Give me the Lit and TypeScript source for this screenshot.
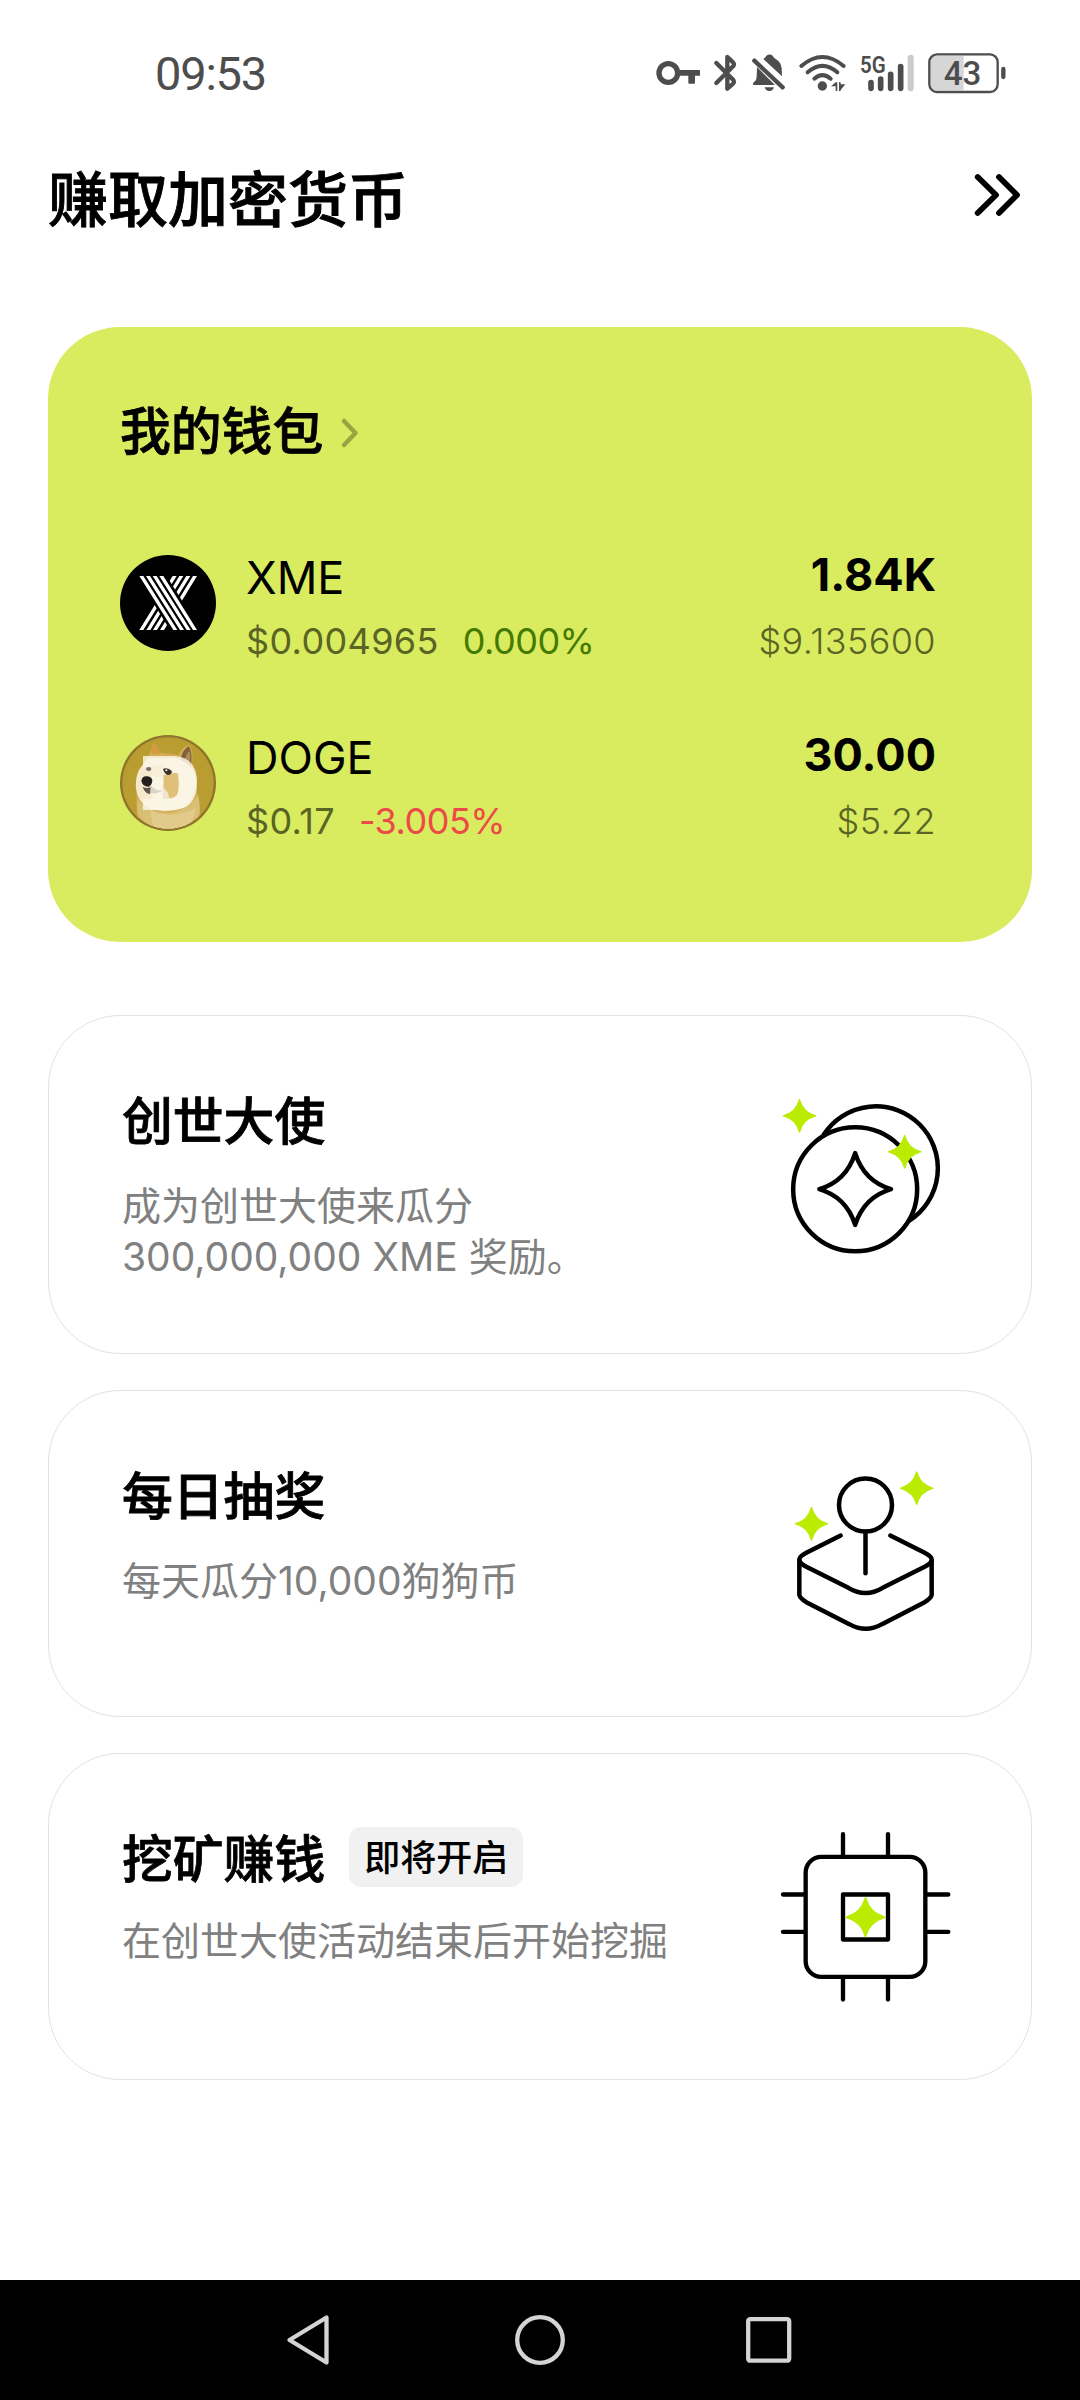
import { LitElement, html, css, svg, nothing, TemplateResult } from "lit";
import { customElement, property } from "lit/decorators.js";

const sparkle = (cx: number, cy: number, r: number) => svg`
  <path fill="#baeb00" transform="translate(${cx} ${cy}) scale(${r / 50})"
    d="M0-50 Q2-50 3-45 Q12-13 45-3 Q50-2 50 0 Q50 2 45 3 Q12 13 3 45 Q2 50 0 50 Q-2 50 -3 45 Q-12 13 -45 3 Q-50 2 -50 0 Q-50-2 -45-3 Q-12-13 -3-45 Q-2-50 0-50Z"/>`;

const coinsIcon = html`<svg viewBox="30 28.5 570 570" width="190" height="190" fill="none" stroke="#000" stroke-width="13.500" stroke-linecap="round" stroke-linejoin="round">
  <circle cx="285.500" cy="326.500" r="186"/>
  <path d="M191 163 A186 186 0 1 1 448 420"/>
  <path d="M285.500 218 Q312 302 393 326 Q312 350 285.500 433 Q259 350 178 326 Q259 302 285.500 218Z"/>
  <g stroke="none">${sparkle(118.5, 106, 51)}${sparkle(434, 214, 51)}</g>
</svg>`;

const joystickIcon = html`<svg viewBox="30 25.500 570 570" width="190" height="190" fill="none" stroke="#000" stroke-width="13.500" stroke-linecap="round" stroke-linejoin="round">
  <circle cx="316.500" cy="163.500" r="79.500"/>
  <path d="M316.500 244V368"/>
  <path d="M242 255 L139 307 Q118 318 118 327 Q118 338 139 349 L265 412 Q317 443 368 412 L494 349 Q515 338 515 327 Q515 318 494 307 L391 255"/>
  <path d="M118 330V433 Q119 443 139 455 L268 521 Q317 549 366 521 L494 455 Q514 443 515 433 V330"/>
  <g stroke="none">${sparkle(470, 113, 51)}${sparkle(154.5, 220, 51)}</g>
</svg>`;

const chipIcon = html`<svg viewBox="30 34.500 570 570" width="190" height="190" fill="none" stroke="#000" stroke-width="13" stroke-linecap="round" stroke-linejoin="round">
  <rect x="137" y="139" width="359" height="360" rx="47"/>
  <rect x="249" y="252" width="135" height="135"/>
  <path d="M249 71V136M384 71V136M249 502V567M384 502V567M69 252H134M69 364H134M499 252H565M499 364H565"/>
  <g stroke="none">${sparkle(316.5, 320, 61)}</g>
</svg>`;

const xmeIcon = html`<svg viewBox="0 0 288 288" width="96" height="96">
  <circle cx="144" cy="144" r="144"/>
  <path fill="#fff" d="M158 63H170L70 225H58ZM178 63H190L91 225H79ZM199 63H211L111 225H99ZM219 63H231L132 225H120Z"/>
  <path d="M48 60H138L243 228H152Z"/>
  <path fill="#fff" d="M58 63H70L172 225H160ZM78 63H90L192 225H180ZM98 63H110L212 225H200ZM118 63H130L231 225H219Z"/>
</svg>`;

const dogeIcon = html`<svg viewBox="60 615 288 288" width="96" height="96">
  <defs><clipPath id="coin"><circle cx="204" cy="759" r="137"/></clipPath></defs>
  <circle cx="204" cy="759" r="144" fill="#8f742b"/>
  <circle cx="204" cy="759" r="137" fill="#b99d31"/>
  <g clip-path="url(#coin)">
    <path d="M110 800 Q106 750 130 700 L155 660 Q156 640 163 640 Q172 646 182 668 Q210 668 235 676 Q250 646 268 645 Q281 665 276 700 Q286 740 291 785 Q303 815 300 850 L285 905H120 Q106 850 110 800Z" fill="#d3ac55"/>
    <path d="M155 672 Q156 645 163 640 Q174 650 182 670Z" fill="#d39a44"/>
    <path d="M242 690 Q246 660 266 649 Q278 665 273 706 L262 720Z" fill="#80603a"/>
    <path d="M254 694 Q258 670 268 662 Q274 680 268 704Z" fill="#ad8b5d"/>
    <path d="M108 775 Q104 730 128 705 L145 685 H225 Q275 695 289 745 Q290 800 258 828 Q205 855 145 835 Q112 815 108 775Z" fill="#f4e8cd"/>
    <path d="M112 810 Q150 850 210 848 Q265 842 294 795 Q301 830 297 858 Q250 900 190 903 Q125 885 112 845Z" fill="#d9bf74"/>
    <path d="M150 840 Q205 870 290 835 L270 890 Q215 912 160 890Z" fill="#e2ca8b"/>
    <path d="M155 708 Q172 700 190 708 V742 Q175 748 158 735Z" fill="#e3c682"/>
    <path d="M190 728H232 Q240 760 232 795 Q222 806 190 806Z" fill="#e0c078"/>
    <path d="M190 775 Q204 780 208 806H190Z" fill="#f0e4cc"/>
    <path fill-rule="evenodd" d="M129 678H222Q291 682 291 758Q291 836 222 840H129V806H155V712H129ZM190 735V806H213Q238 804 238 760Q238 733 232 728H214Q208 736 190 735Z" fill="#fbf8ea" opacity=".82"/>
    <path d="M152 766 Q168 786 188 779 Q178 792 150 790Z" fill="#dcd3cb"/>
    <path d="M124 752 Q127 738 140 739 Q154 740 157 750 Q157 764 146 770 Q126 768 124 752Z" fill="#241e1c"/>
    <path d="M128 770 Q140 777 152 771 L150 792 Q134 790 128 770Z" fill="#62544a"/>
    <ellipse cx="146" cy="717" rx="8" ry="6" fill="#77716b"/>
    <path d="M189 717 Q202 710 216 724 Q214 736 203 735 Q193 732 189 717Z" fill="#3a332a"/>
    <circle cx="199" cy="721" r="3" fill="#fff"/>
  </g>
</svg>`;

const statusIcons = html`<svg class="status-icons" viewBox="0 0 1140 210" width="380" height="70" fill="none" stroke="#4d4d4d" stroke-linecap="round" stroke-linejoin="round">
  <circle cx="85" cy="99" r="28" stroke-width="16"/>
  <path d="M117 90H177Q180 90 180 93V107H165V128Q165 131 162 131H148Q145 131 145 128V107H117Z" fill="#4d4d4d" stroke="none"/>
  <path d="M229 69 L277 117 Q287 125 277 133 L262 146 V51 L277 65 Q287 72 277 81 L229 129" stroke-width="13"/>
  <path d="M343 62 L428 142" stroke-width="13"/>
  <g fill="#4d4d4d" stroke="none">
    <path d="M351 81 L405 135H340Q337 129 343 125Q350 120 350 110Z"/>
    <path d="M370 57 Q377 53 379 47 Q389 40 398 47 Q400 53 407 57 Q423 66 425 85 L426 109Z"/>
    <path d="M374 142H402Q399 153 388 153Q377 153 374 142Z"/>
    <circle cx="547" cy="138" r="14"/>
    <path d="M573 139L587 127V139ZM587 127H592V153H587ZM597 127H602V153H597ZM602 133H616L602 150Z"/>
  </g>
  <path d="M484 78 Q547 24 611 78M503 97 Q547 58 592 97M523 116 Q547 95 572 116" stroke-width="12"/>
  <path d="M693 128V145M722 117V145M752 103V145M782 80V145" stroke-width="17"/>
  <path d="M812 53V145" stroke-width="18" stroke="#cbcbcb"/>
  <path d="M884 48H971V151H884Q872 151 872 138V61Q872 48 884 48Z" fill="#d6d6d6" stroke="none"/>
  <rect x="868" y="43" width="205" height="113" rx="23" stroke-width="7"/>
  <path d="M1090 87V111" stroke-width="13"/>
  <g fill="#4d4d4d" stroke="none" font-family="Roboto, sans-serif">
    <text x="660" y="98" font-size="72" font-weight="600" textLength="77" lengthAdjust="spacingAndGlyphs">5G</text>
    <text x="911" y="135" font-size="101" font-weight="500" textLength="113" lengthAdjust="spacingAndGlyphs">43</text>
  </g>
</svg>`;

interface Coin {
  icon: TemplateResult;
  symbol: string;
  price: string;
  change: string;
  trend: "flat" | "down";
  amount: string;
  value: string;
}

const coins: Coin[] = [
  { icon: xmeIcon, symbol: "XME", price: "$0.004965", change: "0.000%", trend: "flat", amount: "1.84K", value: "$9.135600" },
  { icon: dogeIcon, symbol: "DOGE", price: "$0.17", change: "-3.005%", trend: "down", amount: "30.00", value: "$5.22" },
];

@customElement("coin-row")
export class CoinRow extends LitElement {
  @property({ attribute: false }) coin!: Coin;

  static styles = css`
    :host { display: flex; align-items: flex-start; height: 115px; color: #000; }
    svg { display: block; margin-top: 7px; }
    .info { margin: 3px 0 0 30px; flex: 1; display: flex; flex-direction: column; gap: 14px; }
    .symbol { font-size: 45px; line-height: 54px; font-weight: 430; }
    .quote { display: flex; gap: 24px; font-size: 36px; line-height: 44px; font-weight: 440; color: #5a6425; }
    .price { letter-spacing: 0.35px; }
    .change { letter-spacing: -0.5px; }
    .flat { color: #457a00; }
    .down { color: #ec4a48; }
    .totals { display: flex; flex-direction: column; gap: 17px; text-align: right; }
    .amount { font-size: 45px; line-height: 54px; font-weight: 700; }
    .value { font-size: 36px; line-height: 44px; font-weight: 340; letter-spacing: 0.4px; color: #5a6425; }
  `;

  render() {
    const c = this.coin;
    return html`
      ${c.icon}
      <div class="info">
        <div class="symbol">${c.symbol}</div>
        <div class="quote"><span class="price">${c.price}</span><span class="change ${c.trend}">${c.change}</span></div>
      </div>
      <div class="totals">
        <div class="amount">${c.amount}</div>
        <div class="value">${c.value}</div>
      </div>`;
  }
}

@customElement("task-card")
export class TaskCard extends LitElement {
  @property() heading = "";
  @property() text = "";
  @property() badge = "";
  @property({ attribute: false }) icon: TemplateResult | typeof nothing = nothing;

  static styles = css`
    :host { box-sizing: border-box; display: flex; justify-content: space-between; border: 1.5px solid #e2e2e2; border-radius: 72px; padding: 0 71px 0 73px; }
    .body { padding-top: 76px; }
    .head { display: flex; align-items: center; gap: 24px; height: 60px; }
    h2 { margin: 0; font-size: 50.800px; line-height: 60px; font-weight: 500; -webkit-text-stroke: 0.8px #000; color: #000; }
    .badge { background: #f1f1f1; border-radius: 12px; padding: 2px 15px 0; font-size: 36px; line-height: 58px; height: 58px; font-weight: 500; color: #000; margin-top: -7px; }
    p { margin: 28px 0 0; font-size: 39px; line-height: 51px; color: #808080; white-space: pre-line; }
    .tight { margin-top: 25px; }
    .icon { align-self: center; }
    svg { display: block; }
  `;

  render() {
    return html`
      <div class="body">
        <div class="head">
          <h2>${this.heading}</h2>
          ${this.badge ? html`<span class="badge">${this.badge}</span>` : nothing}
        </div>
        <p class=${this.badge ? "tight" : ""}>${this.text}</p>
      </div>
      <div class="icon">${this.icon}</div>`;
  }
}

@customElement("app-root")
export class AppRoot extends LitElement {
  static styles = css`
    :host { display: flex; flex-direction: column; width: 1080px; height: 2400px; background: #fff; color: #000; font-family: Inter, "Noto Sans CJK SC", sans-serif; overflow: hidden; }
    .status { box-sizing: border-box; height: 110px; padding: 40px 60px 0 155px; display: flex; justify-content: space-between; }
    .time { font-family: Roboto, sans-serif; font-size: 47px; line-height: 68px; letter-spacing: -1.2px; color: #4d4d4d; }
    .header { height: 217px; box-sizing: border-box; padding: 60px 57px 0 48px; display: flex; justify-content: space-between; }
    h1 { margin: 0; font-size: 60px; line-height: 60px; font-weight: 500; -webkit-text-stroke: 0.9px #000; }
    .more { display: block; margin-top: 1px; }
    .content { flex: 1; padding: 0 48px; display: flex; flex-direction: column; }
    .wallet { box-sizing: border-box; height: 615px; border-radius: 72px; background: #d9ec5f; padding: 75px 96px 0 72px; margin-bottom: 73px; }
    .wallet-title { display: flex; align-items: center; gap: 17px; margin: 0 0 86px; font-size: 50.800px; line-height: 60px; font-weight: 500; -webkit-text-stroke: 0.8px #000; }
    .coins { display: flex; flex-direction: column; gap: 65px; }
    .tasks { display: flex; flex-direction: column; gap: 36px; }
    .tall { height: 339px; }
    .short { height: 327px; }
    .nav { height: 120px; background: #000; display: flex; justify-content: center; align-items: center; gap: 177px; }
    .nav svg { display: block; }
  `;

  render() {
    return html`
      <div class="status"><span class="time">09:53</span>${statusIcons}</div>
      <header class="header">
        <h1>赚取加密货币</h1>
        <svg class="more" width="51" height="48" viewBox="0 0 51 48" fill="none" stroke="#000" stroke-width="5.800" stroke-linecap="round" stroke-linejoin="round"><path d="M5.700 6 L24 24 L5.700 42M27 6 L45 24 L27 42"/></svg>
      </header>
      <main class="content">
        <section class="wallet">
          <h2 class="wallet-title">我的钱包
            <svg width="24" height="36" viewBox="0 0 24 36" fill="none" stroke="#98a543" stroke-width="4.500" stroke-linecap="round" stroke-linejoin="round"><path d="M4 7 L15.500 19 L4 31"/></svg>
          </h2>
          <div class="coins">${coins.map((c) => html`<coin-row .coin=${c}></coin-row>`)}</div>
        </section>
        <section class="tasks">
          <task-card class="tall" heading="创世大使" .text=${"成为创世大使来瓜分\n300,000,000 XME 奖励。"} .icon=${coinsIcon}></task-card>
          <task-card class="short" heading="每日抽奖" text="每天瓜分10,000狗狗币" .icon=${joystickIcon}></task-card>
          <task-card class="short" heading="挖矿赚钱" badge="即将开启" text="在创世大使活动结束后开始挖掘" .icon=${chipIcon}></task-card>
        </section>
      </main>
      <nav class="nav">
        <svg width="52" height="52" viewBox="0 0 52 52" fill="none" stroke="#d4d4d4" stroke-width="4.300" stroke-linejoin="round"><path d="M41.500 3.500V48.500L4.500 26Z"/></svg>
        <svg width="52" height="52" viewBox="0 0 52 52" fill="none" stroke="#d4d4d4" stroke-width="4.300"><circle cx="26" cy="26" r="22.800"/></svg>
        <svg width="52" height="52" viewBox="0 0 52 52" fill="none" stroke="#d4d4d4" stroke-width="4.300"><rect x="5.200" y="5.200" width="41" height="41.500" rx="2"/></svg>
      </nav>`;
  }
}
